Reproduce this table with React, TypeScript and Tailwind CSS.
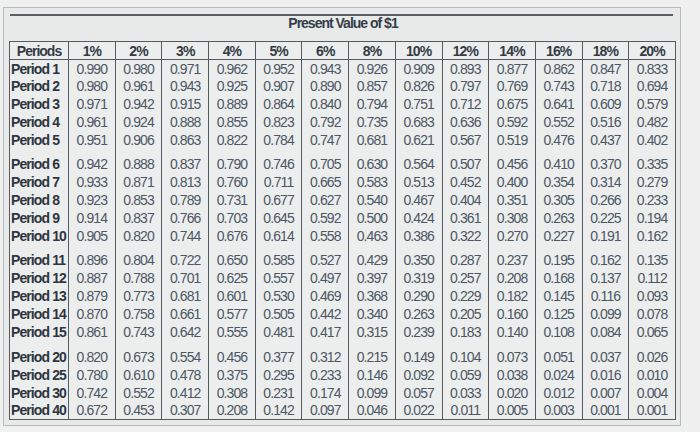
import React from "react";

const rates = ["1%", "2%", "3%", "4%", "5%", "6%", "8%", "10%", "12%", "14%", "16%", "18%", "20%"];

const groups: { label: string; values: string[] }[][] = [
  [
    { label: "Period 1", values: ["0.990", "0.980", "0.971", "0.962", "0.952", "0.943", "0.926", "0.909", "0.893", "0.877", "0.862", "0.847", "0.833"] },
    { label: "Period 2", values: ["0.980", "0.961", "0.943", "0.925", "0.907", "0.890", "0.857", "0.826", "0.797", "0.769", "0.743", "0.718", "0.694"] },
    { label: "Period 3", values: ["0.971", "0.942", "0.915", "0.889", "0.864", "0.840", "0.794", "0.751", "0.712", "0.675", "0.641", "0.609", "0.579"] },
    { label: "Period 4", values: ["0.961", "0.924", "0.888", "0.855", "0.823", "0.792", "0.735", "0.683", "0.636", "0.592", "0.552", "0.516", "0.482"] },
    { label: "Period 5", values: ["0.951", "0.906", "0.863", "0.822", "0.784", "0.747", "0.681", "0.621", "0.567", "0.519", "0.476", "0.437", "0.402"] },
  ],
  [
    { label: "Period 6", values: ["0.942", "0.888", "0.837", "0.790", "0.746", "0.705", "0.630", "0.564", "0.507", "0.456", "0.410", "0.370", "0.335"] },
    { label: "Period 7", values: ["0.933", "0.871", "0.813", "0.760", "0.711", "0.665", "0.583", "0.513", "0.452", "0.400", "0.354", "0.314", "0.279"] },
    { label: "Period 8", values: ["0.923", "0.853", "0.789", "0.731", "0.677", "0.627", "0.540", "0.467", "0.404", "0.351", "0.305", "0.266", "0.233"] },
    { label: "Period 9", values: ["0.914", "0.837", "0.766", "0.703", "0.645", "0.592", "0.500", "0.424", "0.361", "0.308", "0.263", "0.225", "0.194"] },
    { label: "Period 10", values: ["0.905", "0.820", "0.744", "0.676", "0.614", "0.558", "0.463", "0.386", "0.322", "0.270", "0.227", "0.191", "0.162"] },
  ],
  [
    { label: "Period 11", values: ["0.896", "0.804", "0.722", "0.650", "0.585", "0.527", "0.429", "0.350", "0.287", "0.237", "0.195", "0.162", "0.135"] },
    { label: "Period 12", values: ["0.887", "0.788", "0.701", "0.625", "0.557", "0.497", "0.397", "0.319", "0.257", "0.208", "0.168", "0.137", "0.112"] },
    { label: "Period 13", values: ["0.879", "0.773", "0.681", "0.601", "0.530", "0.469", "0.368", "0.290", "0.229", "0.182", "0.145", "0.116", "0.093"] },
    { label: "Period 14", values: ["0.870", "0.758", "0.661", "0.577", "0.505", "0.442", "0.340", "0.263", "0.205", "0.160", "0.125", "0.099", "0.078"] },
    { label: "Period 15", values: ["0.861", "0.743", "0.642", "0.555", "0.481", "0.417", "0.315", "0.239", "0.183", "0.140", "0.108", "0.084", "0.065"] },
  ],
  [
    { label: "Period 20", values: ["0.820", "0.673", "0.554", "0.456", "0.377", "0.312", "0.215", "0.149", "0.104", "0.073", "0.051", "0.037", "0.026"] },
    { label: "Period 25", values: ["0.780", "0.610", "0.478", "0.375", "0.295", "0.233", "0.146", "0.092", "0.059", "0.038", "0.024", "0.016", "0.010"] },
    { label: "Period 30", values: ["0.742", "0.552", "0.412", "0.308", "0.231", "0.174", "0.099", "0.057", "0.033", "0.020", "0.012", "0.007", "0.004"] },
    { label: "Period 40", values: ["0.672", "0.453", "0.307", "0.208", "0.142", "0.097", "0.046", "0.022", "0.011", "0.005", "0.003", "0.001", "0.001"] },
  ],
];

const cellBorder = "border-x border-[#565b61]";

const SpacerRow = ({ h }: { h: string }) => (
  <tr className={h}>
    <td className={cellBorder} />
    {rates.map((r) => (
      <td key={r} className={cellBorder} />
    ))}
  </tr>
);

export default function App() {
  return (
    <div className="w-[700px] h-[432px] overflow-hidden bg-[#eff0ef] font-['Liberation_Sans',Arial,sans-serif]">
      <div className="ml-[3px] mt-[7px] w-[678px] h-[419px] border border-[#b7bbbb] bg-[#e8eae9] pt-[6px] pl-[5px] pr-[3px]">
        <div className="h-[1.5px] ml-[1px] mr-[4px] bg-[#5b5f63]" />
        <div className="h-[16px] mb-[9.5px] flex items-center justify-center text-[14px] font-bold tracking-[-1px] text-[#353d4a]">
          Present Value of $1
        </div>
        <table className="w-[667px] table-fixed border-collapse bg-[#eceeed] text-[14px] tracking-[-0.9px] leading-none">
          <colgroup>
            <col className="w-[59px]" />
            {rates.map((r) => (
              <col key={r} />
            ))}
          </colgroup>
          <thead>
            <tr className="h-[18px] border-y border-[#565b61]">
              <th className={`${cellBorder} text-center font-bold tracking-[-1px] text-[#343b46]`}>Periods</th>
              {rates.map((r) => (
                <th key={r} className={`${cellBorder} text-center font-bold text-[#343b46]`}>
                  {r}
                </th>
              ))}
            </tr>
          </thead>
          <tbody className="border-b border-[#565b61]">
            {groups.map((group, gi) => (
              <React.Fragment key={gi}>
                {gi > 0 ? <SpacerRow h={gi === 3 ? "h-[8px]" : "h-[7px]"} /> : null}
                {group.map((row) => (
                  <tr key={row.label} className="h-[17.8px]">
                    <td className={`${cellBorder} pl-[1px] text-left font-bold tracking-[-0.9px] text-[#2f3540] whitespace-nowrap`}>
                      {row.label}
                    </td>
                    {row.values.map((v, i) => (
                      <td key={i} className={`${cellBorder} text-center text-[#4d5664]`}>
                        {v}
                      </td>
                    ))}
                  </tr>
                ))}
              </React.Fragment>
            ))}
          </tbody>
        </table>
      </div>
    </div>
  );
}
